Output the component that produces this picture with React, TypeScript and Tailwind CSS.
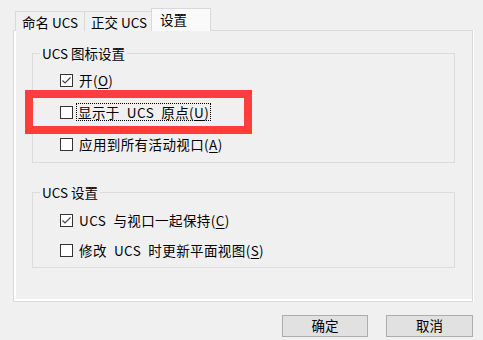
import React from "react";

function Box({ checked }: { checked?: boolean }) {
  return (
    <span className="w-[13px] h-[13px] border border-[#333333] bg-white flex items-center justify-center shrink-0">
      {checked && (
        <svg width="11" height="11" viewBox="0 0 11 11">
          <polyline points="1.5,5.5 4,8 9.5,2.5" fill="none" stroke="#444444" strokeWidth="1.2" />
        </svg>
      )}
    </span>
  );
}

function Row({ checked, children, focus }: { checked?: boolean; children: React.ReactNode; focus?: boolean }) {
  return (
    <div className="flex items-center h-[20px] ml-[20px] tracking-[0.4px]">
      <Box checked={checked} />
      {focus ? (
        <span className="ml-[3px] px-[1px] border border-dotted border-black leading-[16px] whitespace-pre">{children}</span>
      ) : (
        <span className="ml-[6px] leading-[16px] whitespace-pre">{children}</span>
      )}
    </div>
  );
}

function U({ c }: { c: string }) {
  return <span className="underline underline-offset-2">{c}</span>;
}

export default function App() {
  return (
    <div className="relative w-[483px] h-[340px] overflow-hidden bg-[#f0f0f0] text-black text-[13.5px] font-['Noto_Sans_CJK_SC',sans-serif]">
      {/* tabs */}
      <div className="flex items-end h-[31px] pt-[8px] pl-[15px] relative z-10">
        <div className="w-[69px] h-[20px] border-l border-t border-[#d9d9d9] bg-[#f0f0f0] pl-[6px] pt-[2px] leading-[16px] whitespace-pre">命名 UCS</div>
        <div className="w-[67px] h-[20px] border-l border-t border-[#d9d9d9] bg-[#f0f0f0] pl-[6px] pt-[2px] leading-[16px] whitespace-pre">正交 UCS</div>
        <div className="w-[60px] h-[23px] border-l border-t border-r border-[#d9d9d9] bg-[#fafafa] pl-[8px] pt-[2px] leading-[16px]">设置</div>
      </div>
      {/* panel */}
      <div className="ml-[13px] mt-[-1px] w-[460px] h-[272px] border border-[#d9d9d9] shadow-[inset_2px_-2px_0_#ffffff,1px_0_0_#ffffff] pt-[13px] pl-[18px]">
        <fieldset className="w-[423px] border border-[#dcdcdc] pl-[7px] pb-[8px]">
          <legend className="px-[2px] leading-[18px] whitespace-pre">UCS 图标设置</legend>
          <div className="flex flex-col gap-[12px] pt-[8px]">
            <Row checked>
              开(<U c="O" />)
            </Row>
            <Row focus>
              显示于{"\u2002"}UCS{"\u2002"}原点(<U c="U" />)
            </Row>
            <Row>
              应用到所有活动视口(<U c="A" />)
            </Row>
          </div>
        </fieldset>
        <fieldset className="mt-[20px] w-[423px] border border-[#dcdcdc] pl-[7px] pb-[7px]">
          <legend className="px-[2px] leading-[18px] whitespace-pre">UCS 设置</legend>
          <div className="flex flex-col gap-[10px] pt-[9px]">
            <Row checked>
              UCS{"\u2002"}与视口一起保持(<U c="C" />)
            </Row>
            <Row>
              修改{"\u2002"}UCS{"\u2002"}时更新平面视图(<U c="S" />)
            </Row>
          </div>
        </fieldset>
      </div>
      {/* buttons */}
      <div className="flex justify-end gap-[18px] pr-[10px] mt-[13px]">
        <button className="w-[86px] h-[22px] bg-[#e1e1e1] border border-[#adadad] flex items-center justify-center leading-none">确定</button>
        <button className="w-[87px] h-[22px] bg-[#e1e1e1] border border-[#adadad] flex items-center justify-center leading-none">取消</button>
      </div>
      {/* annotation */}
      <div className="absolute left-[25px] top-[90px] w-[227px] h-[44px] border-[8px] border-[#ff3d3d]" />
    </div>
  );
}
